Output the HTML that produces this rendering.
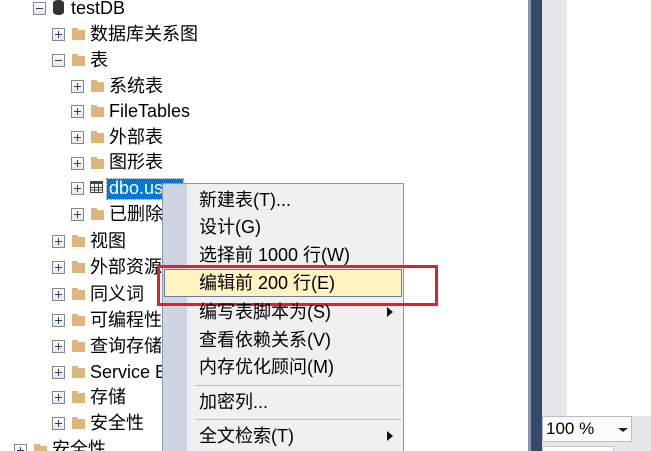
<!DOCTYPE html>
<html style="overflow:hidden"><head><style>
html,body{margin:0;width:651px;height:451px;overflow:hidden}
body{background:#fff;position:relative;font-family:"Liberation Sans","Noto Sans CJK SC",sans-serif;font-size:18px;color:#000}
.a{position:absolute}
.row{position:absolute;height:22px;line-height:22px;white-space:nowrap}
.ex{position:absolute;width:11px;height:11px;border:1px solid #888;background:linear-gradient(#fff,#e8e8e8)}
.ex:before{content:"";position:absolute;left:2px;top:5px;width:7px;height:1px;background:#1e3f78}
.ex.p:after{content:"";position:absolute;left:5px;top:2px;width:1px;height:7px;background:#1e3f78}
.fd{position:absolute;width:13px;height:10px;background:#dcb67a}
.fd:before{content:"";position:absolute;left:0;top:-2px;width:6px;height:2px;background:#dcb67a}
.mi{position:absolute;left:199px;white-space:nowrap;line-height:20px}
</style></head><body>
<div class="a" style="left:528px;top:0;width:3px;height:451px;background:#8a93ad"></div>
<div class="a" style="left:531px;top:0;width:11px;height:451px;background:#364a6b"></div>
<div class="a" style="left:542px;top:0;width:25px;height:416px;background:#e6e7ea"></div>
<div class="a" style="left:542px;top:416px;width:109px;height:35px;background:#e6e7ea"></div>
<div class="a" style="left:542px;top:416px;border:1px solid #b6bdd2;background:#fcfcfc;font-size:17px;line-height:24px;padding-left:3px;box-sizing:border-box;width:90px;height:26px">100 %</div>
<div class="a" style="left:618px;top:428px;width:0;height:0;border-left:5px solid transparent;border-right:5px solid transparent;border-top:4px solid #222"></div>
<div class="a" style="left:542px;top:446px;width:70px;height:5px;background:#fff;border:1px solid #ccc"></div>

<div class="ex" style="left:33px;top:2px"></div>
<div class="a" style="left:53px;top:0px;width:11px;height:15px;background:#333;border-radius:5px/3px"></div>
<div class="row" style="left:71px;top:-3px">testDB</div>

<div class="ex p" style="left:52px;top:28px"></div><div class="fd" style="left:72px;top:30px"></div><div class="row" style="left:90px;top:23px">数据库关系图</div>
<div class="ex" style="left:52px;top:54px"></div><div class="fd" style="left:72px;top:56px"></div><div class="row" style="left:90px;top:49px">表</div>
<div class="ex p" style="left:71px;top:80px"></div><div class="fd" style="left:91px;top:82px"></div><div class="row" style="left:109px;top:75px">系统表</div>
<div class="ex p" style="left:71px;top:105px"></div><div class="fd" style="left:91px;top:107px"></div><div class="row" style="left:109px;top:100px">FileTables</div>
<div class="ex p" style="left:71px;top:131px"></div><div class="fd" style="left:91px;top:133px"></div><div class="row" style="left:109px;top:126px">外部表</div>
<div class="ex p" style="left:71px;top:157px"></div><div class="fd" style="left:91px;top:159px"></div><div class="row" style="left:109px;top:151px">图形表</div>
<div class="ex p" style="left:71px;top:182px"></div>
<svg class="a" style="left:90px;top:181px" width="13" height="12"><rect x="0.5" y="0.5" width="12" height="11" fill="#fff" stroke="#444"/><rect x="0" y="0" width="13" height="3" fill="#444"/><path d="M0 6.5H13M0 9H13M4.5 3V12M8.5 3V12" stroke="#444"/></svg>
<div class="a" style="left:107px;top:179px;width:76px;height:20px;background:#0078d7;outline:1px dotted #e08000"></div>
<div class="row" style="left:109px;top:177px;color:#fff">dbo.users</div>
<div class="ex p" style="left:71px;top:208px"></div><div class="fd" style="left:91px;top:210px"></div><div class="row" style="left:109px;top:203px">已删除的表</div>
<div class="ex p" style="left:52px;top:235px"></div><div class="fd" style="left:72px;top:237px"></div><div class="row" style="left:90px;top:230px">视图</div>
<div class="ex p" style="left:52px;top:261px"></div><div class="fd" style="left:72px;top:263px"></div><div class="row" style="left:90px;top:256px">外部资源</div>
<div class="ex p" style="left:52px;top:288px"></div><div class="fd" style="left:72px;top:290px"></div><div class="row" style="left:90px;top:283px">同义词</div>
<div class="ex p" style="left:52px;top:314px"></div><div class="fd" style="left:72px;top:316px"></div><div class="row" style="left:90px;top:309px">可编程性</div>
<div class="ex p" style="left:52px;top:340px"></div><div class="fd" style="left:72px;top:342px"></div><div class="row" style="left:90px;top:335px">查询存储</div>
<div class="ex p" style="left:52px;top:366px"></div><div class="fd" style="left:72px;top:368px"></div><div class="row" style="left:90px;top:361px">Service Broker</div>
<div class="ex p" style="left:52px;top:391px"></div><div class="fd" style="left:72px;top:393px"></div><div class="row" style="left:90px;top:386px">存储</div>
<div class="ex p" style="left:52px;top:417px"></div><div class="fd" style="left:72px;top:419px"></div><div class="row" style="left:90px;top:412px">安全性</div>
<div class="ex p" style="left:14px;top:444px"></div><div class="fd" style="left:34px;top:446px"></div><div class="row" style="left:52px;top:438px">安全性</div>

<div class="a" style="left:162px;top:183px;width:240px;height:268px;border:1px solid #8f97ab;border-bottom:none;background:#f0f0f0"></div>
<div class="a" style="left:163px;top:184px;width:24px;height:267px;background:#ced4e2"></div>
<div class="a" style="left:164px;top:269px;width:236px;height:26px;background:#fff3c2;border:1px solid #707a99"></div>
<div class="a" style="left:157px;top:265px;width:275px;height:35px;border:3px solid #e3202a"></div>
<div class="a" style="left:195px;top:385px;width:206px;height:1px;background:#b8bdca"></div>
<div class="a" style="left:195px;top:419px;width:206px;height:1px;background:#b8bdca"></div>
<div class="mi" style="top:190px">新建表(T)...</div>
<div class="mi" style="top:217px">设计(G)</div>
<div class="mi" style="top:245px">选择前 1000 行(W)</div>
<div class="mi" style="top:273px">编辑前 200 行(E)</div>
<div class="mi" style="top:302px">编写表脚本为(S)</div>
<div class="mi" style="top:330px">查看依赖关系(V)</div>
<div class="mi" style="top:357px">内存优化顾问(M)</div>
<div class="mi" style="top:392px">加密列...</div>
<div class="mi" style="top:426px">全文检索(T)</div>
<div class="a" style="left:387px;top:307px;border-top:5px solid transparent;border-bottom:5px solid transparent;border-left:6px solid #111"></div>
<div class="a" style="left:387px;top:431px;border-top:5px solid transparent;border-bottom:5px solid transparent;border-left:6px solid #111"></div>
</body></html>
